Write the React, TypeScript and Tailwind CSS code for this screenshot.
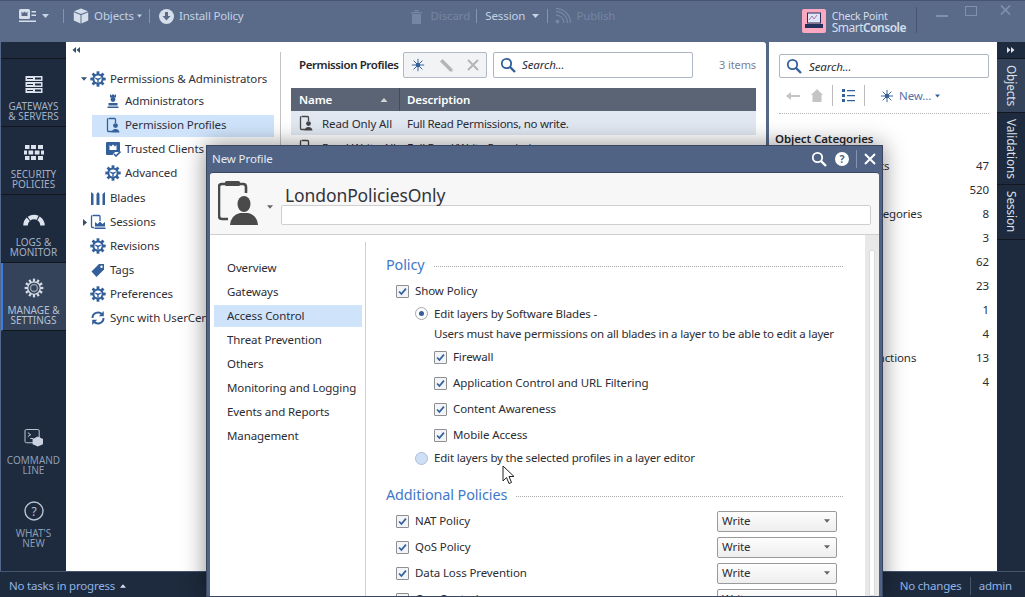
import React from "react";

const B = "#33609a";

function Gear({ c = B, s = 16 }: { c?: string; s?: number }) {
  const teeth = [0, 45, 90, 135, 180, 225, 270, 315];
  return (
    <svg width={s} height={s} viewBox="0 0 16 16" className="shrink-0">
      {teeth.map((a) => (
        <rect key={a} x="6.6" y="0.3" width="2.8" height="3.4" fill={c} transform={`rotate(${a} 8 8)`} />
      ))}
      <circle cx="8" cy="8" r="5.6" fill={c} />
      <circle cx="8" cy="8" r="3.6" fill="#fff" />
      <path d="M5.2 6.4 L8 7.6 L10.8 6.4 L10.8 7.8 L8.7 9 L8.7 11.4 L7.3 11.4 L7.3 9 L5.2 7.8Z" fill={c} />
    </svg>
  );
}

function ProfileIcon({ c = B, s = 16 }: { c?: string; s?: number }) {
  return (
    <svg width={s} height={s} viewBox="0 0 16 16" className="shrink-0">
      <path d="M4 1.5H9.5Q10.5 1.5 10.5 2.5V6M7 14.5H3.5Q2.5 14.5 2.5 13.5V2.5Q2.5 1.5 3.5 1.5" fill="none" stroke={c} strokeWidth="1.3" />
      <circle cx="10.5" cy="8.6" r="2.4" fill={c} />
      <path d="M6.5 15.5 Q7 12 10.5 12 Q14 12 14.5 15.5Z" fill={c} />
    </svg>
  );
}

function Crown({ c = B }: { c?: string }) {
  return (
    <svg width="16" height="16" viewBox="0 0 16 16" className="shrink-0">
      <path d="M5 1 L6.5 2.5 L8 1 L9.5 2.5 L11 1 V4.5 H5Z" fill={c} />
      <circle cx="8" cy="6.5" r="2.4" fill={c} />
      <path d="M3.5 10 H12.5 V12.5 H3.5Z M2.5 13.5 H13.5 V15 H2.5Z" fill={c} />
    </svg>
  );
}

function Shield() {
  return (
    <svg width="16" height="16" viewBox="0 0 16 16" className="shrink-0">
      <path d="M1 2 Q1 1 2 1 H14 Q15 1 15 2 V10 Q15 11 14 11 H10 L7.5 14 H2 Q1 14 1 13Z" fill={B} />
      <path d="M4.5 4 L6.2 5.6 L8 3.6 L9.8 5.6 L11.5 4 V9 H4.5Z" fill="#fff" />
      <path d="M9 13 L11 15 L15.5 10.5" fill="none" stroke={B} strokeWidth="1.6" />
    </svg>
  );
}

function Blades() {
  return (
    <svg width="16" height="16" viewBox="0 0 16 16" className="shrink-0">
      <path d="M1 2 L3.5 4 V15 H1Z M6.5 4 L8 2 L9.5 4 V15 H6.5Z M15 2 L12.5 4 V15 H15Z" fill={B} />
    </svg>
  );
}

function Session() {
  return (
    <svg width="16" height="16" viewBox="0 0 16 16" className="shrink-0">
      <path d="M3 1.5H9Q10 1.5 10 2.5V7M4 13.5H2.5Q1.5 13.5 1.5 12.5V2.5Q1.5 1.5 2.5 1.5" fill="none" stroke={B} strokeWidth="1.3" />
      <path d="M5 8 L7.5 10 L10 7.5 L12.5 10 L15 8 V12.5 H5Z M4.5 13.5 H15.5 V15 H4.5Z" fill={B} />
    </svg>
  );
}

function Tag() {
  return (
    <svg width="16" height="16" viewBox="0 0 16 16" className="shrink-0">
      <path d="M1.5 9.5 L9 2 H14 V7.5 L6.5 15Z" fill={B} />
      <circle cx="11.5" cy="4.8" r="1.2" fill="#fff" />
    </svg>
  );
}

function Sync() {
  return (
    <svg width="16" height="16" viewBox="0 0 16 16" className="shrink-0">
      <path d="M2.5 8 A5.5 5.5 0 0 1 12 4.2" fill="none" stroke={B} strokeWidth="2" />
      <path d="M13.5 8 A5.5 5.5 0 0 1 4 11.8" fill="none" stroke={B} strokeWidth="2" />
      <path d="M13.8 1 V6.2 H8.8Z M2.2 15 V9.8 H7.2Z" fill={B} />
    </svg>
  );
}

function Spark({ c = B, s = 16 }: { c?: string; s?: number }) {
  return (
    <svg width={s} height={s} viewBox="0 0 16 16" className="shrink-0">
      <g stroke={c} strokeWidth="1.1">
        <path d="M8 1V15M1 8H15M3 3L13 13M13 3L3 13" />
      </g>
      <circle cx="8" cy="8" r="2.6" fill={c} />
    </svg>
  );
}

function Magnifier({ c = B, s = 16 }: { c?: string; s?: number }) {
  return (
    <svg width={s} height={s} viewBox="0 0 16 16" className="shrink-0">
      <circle cx="6.5" cy="6.5" r="4.7" fill="none" stroke={c} strokeWidth="1.8" />
      <path d="M10 10 L15 15" stroke={c} strokeWidth="2.4" />
    </svg>
  );
}

function Caret({ c = "#c5d3e6", w = 7 }: { c?: string; w?: number }) {
  return (
    <svg width={w} height={4} viewBox="0 0 7 4" className="shrink-0">
      <path d="M0 0H7L3.5 4Z" fill={c} />
    </svg>
  );
}

function CaretUp({ c = "#c5d3e6", w = 7 }: { c?: string; w?: number }) {
  return (
    <svg width={w} height={4} viewBox="0 0 7 4" className="shrink-0">
      <path d="M0 4H7L3.5 0Z" fill={c} />
    </svg>
  );
}

function DoubleArrow({ left }: { left?: boolean }) {
  return (
    <svg width="8" height="6" viewBox="0 0 8 6">
      <path d={left ? "M4 0V6L0.5 3Z M8 0V6L4.5 3Z" : "M0 0V6L3.5 3Z M4 0V6L7.5 3Z"} fill="currentColor" />
    </svg>
  );
}

function TreeRow({
  icon,
  label,
  sub,
  first,
  selected,
  caret,
}: {
  icon: React.ReactNode;
  label: string;
  sub?: boolean;
  first?: boolean;
  selected?: boolean;
  caret?: "down" | "right";
}) {
  return (
    <div className={`relative flex h-6 items-center whitespace-nowrap ${sub ? "pl-[39px]" : "pl-[24px]"}`}>
      {selected && <div className="absolute left-[26px] top-[1px] h-[22px] w-[182px] bg-[#cfe4fb]" />}
      {caret === "down" && (
        <span className="absolute left-[15px] top-[11px]">
          <Caret c="#33506f" w={6} />
        </span>
      )}
      {caret === "right" && (
        <svg className="absolute left-[17px] top-[9px]" width="4" height="7" viewBox="0 0 4 7">
          <path d="M0 0V7L4 3.5Z" fill="#33506f" />
        </svg>
      )}
      <span className={`relative flex items-center gap-[4px] ${sub ? "-top-[1px]" : first ? "top-[1px]" : ""}`}>
        {icon}
        <span>{label}</span>
      </span>
    </div>
  );
}

function NavItem({
  icon,
  a,
  b,
  active,
}: {
  icon: React.ReactNode;
  a: string;
  b: string;
  active?: boolean;
}) {
  return (
    <div
      className={`flex h-[68px] flex-col items-center border-b border-[#11161f] pt-[15px] text-[10px] leading-[10px] tracking-normal ${
        active ? "bg-[#34425a] border-l-2 border-l-[#3b7de0] pr-[2px] text-[#b6c2d3]" : "text-[#a3b1c6]"
      }`}
    >
      <div className="flex h-[20px] items-center">{icon}</div>
      <div className="mt-[7px] whitespace-nowrap">{a}</div>
      <div className="whitespace-nowrap">{b}</div>
    </div>
  );
}

function Check({ label }: { label: string }) {
  return (
    <div className="flex items-center gap-[6px] whitespace-nowrap">
      <span className="flex h-[13px] w-[13px] items-center justify-center rounded-[1px] border border-[#8f8f8f] bg-[#f1f4f8]">
        <svg width="9" height="9" viewBox="0 0 10 10">
          <path d="M1.2 5 L3.8 7.8 L8.8 1.8" fill="none" stroke="#33609a" strokeWidth="1.9" />
        </svg>
      </span>
      <span>{label}</span>
    </div>
  );
}

function Section({ title }: { title: string }) {
  return (
    <div className="flex items-center gap-[9px] text-[14.4px] leading-5 text-[#3f78c9]">
      <span className="whitespace-nowrap">{title}</span>
      <span className="mt-[3px] h-0 flex-1 border-t border-dotted border-[#a9a9a9]" />
    </div>
  );
}

function PolicyRow({ label }: { label: string }) {
  return (
    <div className="flex h-[26px] items-center justify-between">
      <div className="pl-[10px]">
        <Check label={label} />
      </div>
      <div className="mr-[6px] flex h-[21px] w-[120px] items-center justify-between rounded-[2px] border border-[#9a9a9a] bg-gradient-to-b from-[#fdfdfd] to-[#eeeeee] pl-[4px] pr-[6px]">
        <span>Write</span>
        <Caret c="#666" w={6} />
      </div>
    </div>
  );
}

const counts: [string, string, string][] = [
  ["Network Objects", "47", "pl-[22px]"],
  ["Services", "520", "pl-[22px]"],
  ["Applications/Categories", "8", "pl-[17px]"],
  ["VPN Communities", "3", "pl-[8px]"],
  ["Data Types", "62", "pl-[22px]"],
  ["Users", "23", "pl-[22px]"],
  ["Servers", "1", "pl-[22px]"],
  ["Time Objects", "4", "pl-[22px]"],
  ["UserCheck Interactions", "13", "pl-[14px]"],
  ["Limit", "4", "pl-[22px]"],
];

function TopText({ children, dim }: { children: React.ReactNode; dim?: boolean }) {
  return <span className={dim ? "text-[#7486a3]" : "text-[#c3d1e4]"}>{children}</span>;
}

const Sep = ({ cls }: { cls: string }) => <span className={`h-[14px] w-px bg-[#8294b0] ${cls}`} />;

export default function App() {
  return (
    <div
      className="relative flex h-[597px] w-[1025px] flex-col overflow-hidden bg-[#56688a] text-[11.5px] tracking-[-0.1px] text-[#2c2c33]"
      style={{ fontFamily: '"Noto Sans", sans-serif' }}
    >
      {/* Title bar */}
      <div className="flex h-[42px] shrink-0 items-start border-t border-[#46556f] bg-[#5a6b8a] pt-[8px]">
        <div className="flex h-[14px] items-center pl-[19px]">
          <svg width="17" height="14" viewBox="0 0 17 14">
            <rect x="0" y="0" width="11" height="10" rx="1.5" fill="#d5deeb" />
            <path d="M2.5 2.5 L4 4 L5.5 2.5 L7 4 L8.5 2.5 V7 H2.5Z" fill="#5a6b8a" />
            <path d="M12.5 2H17V3.5H12.5Z M12.5 5.5H17V7H12.5Z M0 11.5H17V13H0Z" fill="#d5deeb" />
          </svg>
          <span className="ml-[6px]"><Caret /></span>
          <Sep cls="ml-[14px]" />
          <svg className="ml-[9px]" width="16" height="16" viewBox="0 0 16 16">
            <path d="M8 0.5 L15 3.2 L8 6 L1 3.2Z" fill="#d5deeb" />
            <path d="M0.8 4.2 L7.5 7 V15.5 L0.8 12.6Z M15.2 4.2 L8.5 7 V15.5 L15.2 12.6Z" fill="#d5deeb" />
          </svg>
          <span className="ml-[5px]"><TopText>Objects</TopText></span>
          <span className="ml-[3px]"><Caret w={5} /></span>
          <Sep cls="ml-[7px]" />
          <svg className="ml-[9px]" width="15" height="15" viewBox="0 0 15 15">
            <circle cx="7.5" cy="7.5" r="7.5" fill="#d5deeb" />
            <path d="M6 3H9V7H11.5L7.5 11.5L3.5 7H6Z" fill="#5a6b8a" />
          </svg>
          <span className="ml-[5px] tracking-[-0.2px]"><TopText>Install Policy</TopText></span>
          <svg className="ml-[167px]" width="13" height="15" viewBox="0 0 13 15">
            <path d="M1 3H12V4.2H1Z M4.5 1H8.5V2.5H4.5Z M2 5H11V15H2Z" fill="#7486a3" />
          </svg>
          <span className="ml-[7px]"><TopText dim>Discard</TopText></span>
          <Sep cls="ml-[6px]" />
          <span className="ml-[8px]"><TopText>Session</TopText></span>
          <span className="ml-[7px]"><Caret /></span>
          <Sep cls="ml-[8px]" />
          <svg className="ml-[7px]" width="17" height="16" viewBox="0 0 17 16">
            <path d="M1 7 A8 8 0 0 1 9 15 M1 3.5 A11.5 11.5 0 0 1 12.5 15 M1 0.5 A14.5 14.5 0 0 1 15.5 15" fill="none" stroke="#7486a3" strokeWidth="1.3" />
            <circle cx="2.5" cy="13.5" r="2" fill="#7486a3" />
          </svg>
          <span className="ml-[4px]"><TopText dim>Publish</TopText></span>
        </div>
        <div className="ml-auto flex items-start">
          <div className="flex h-[24px] w-[24px] items-center justify-center rounded-[2px] bg-[#fba8c0]">
            <svg width="20" height="18" viewBox="0 0 20 18">
              <rect x="3.5" y="1" width="13" height="10" fill="#dfe6f5" stroke="#23305c" />
              <path d="M5 8 L8 4 L10 7 L13 3" fill="none" stroke="#a06090" strokeWidth="0.8" />
              <path d="M1 12 H19 V16 H1Z" fill="#23305c" />
            </svg>
          </div>
          <div className="ml-[6px] flex h-[26px] flex-col justify-center whitespace-nowrap leading-[12px] text-[#d5deeb]">
            <span className="text-[10.5px] tracking-[-0.2px]">Check Point</span>
            <span className="text-[12px] tracking-[-0.5px]">
              Smart<b className="font-semibold">Console</b>
            </span>
          </div>
          <span className="ml-[10px] mt-[-2px] h-[26px] w-px bg-[#46556f]" />
          <span className="ml-[19px] mt-[6px] h-[2px] w-[12px] bg-[#7f91ae]" />
          <span className="ml-[17px] mt-[-3px] h-[10px] w-[12px] border border-[#7f91ae]" />
          <svg className="ml-[23px] mr-[14px] mt-[-4px]" width="11" height="10" viewBox="0 0 12 11">
            <path d="M1 0.5 L11 10.5 M11 0.5 L1 10.5" stroke="#7f91ae" strokeWidth="1.8" />
          </svg>
        </div>
      </div>

      {/* Body */}
      <div className="flex min-h-0 flex-1">
        {/* Left nav */}
        <div className="flex w-[66px] shrink-0 flex-col border-l border-[#56688a] bg-[#1e2a3d]">
          <div className="h-[17px] border-b border-[#11161f]" />
          <NavItem
            a="GATEWAYS"
            b="& SERVERS"
            icon={
              <svg width="18" height="17" viewBox="0 0 18 17">
                {[0, 6, 12].map((y) => (
                  <g key={y}>
                    <rect x="0.5" y={y} width="17" height="5" fill="#dde4ee" />
                    <rect x="10" y={y + 1.5} width="6" height="2" fill="#1e2a3d" />
                    <rect x="2" y={y + 2} width="6" height="1" fill="#1e2a3d" />
                  </g>
                ))}
              </svg>
            }
          />
          <NavItem
            a="SECURITY"
            b="POLICIES"
            icon={
              <svg width="20" height="15" viewBox="0 0 20 15">
                <path d="M1 0H5.5V4H1Z M7 0H12V4H7Z M14 0H19V4H14Z M0 5.5H3V9.5H0Z M4.5 5.5H9.2V9.5H4.5Z M10.8 5.5H15.5V9.5H10.8Z M17 5.5H20V9.5H17Z M1 11H5.5V15H1Z M7 11H12V15H7Z M14 11H19V15H14Z" fill="#dde4ee" />
              </svg>
            }
          />
          <NavItem
            a="LOGS &"
            b="MONITOR"
            icon={
              <svg width="22" height="12" viewBox="0 0 22 12">
                <path d="M2.5 11.5 A8.5 8.5 0 0 1 19.5 11.5" fill="none" stroke="#dde4ee" strokeWidth="4.5" strokeDasharray="7 1 9 1 9" />
              </svg>
            }
          />
          <NavItem
            active
            a="MANAGE &"
            b="SETTINGS"
            icon={
              <svg width="20" height="20" viewBox="0 0 16 16">
                {[0, 30, 60, 90, 120, 150, 180, 210, 240, 270, 300, 330].map((a) => (
                  <rect key={a} x="7.1" y="0.5" width="1.8" height="2.6" fill="#d5dbe4" transform={`rotate(${a} 8 8)`} />
                ))}
                <circle cx="8" cy="8" r="5" fill="none" stroke="#d5dbe4" strokeWidth="1" />
                <circle cx="8" cy="8" r="2.8" fill="none" stroke="#8f9aab" strokeWidth="1.2" />
              </svg>
            }
          />
          <div className="mt-auto flex flex-col items-center text-[10px] leading-[10px] tracking-normal text-[#8d9db4]">
            <svg width="20" height="18" viewBox="0 0 20 19">
              <rect x="0.5" y="0.5" width="15" height="14" rx="1.5" fill="none" stroke="#c9d2de" />
              <path d="M3.5 4 L6.5 6 L3.5 8 M6 10 H9" fill="none" stroke="#c9d2de" />
              <path d="M14 8 L19.5 10.5 V16 L14 18.5 L8.5 16 V10.5Z" fill="#c9d2de" />
            </svg>
            <div className="mt-[8px]">COMMAND</div>
            <div>LINE</div>
            <svg className="mt-[26px]" width="20" height="20" viewBox="0 0 20 20">
              <circle cx="10" cy="10" r="9" fill="none" stroke="#b9c3d0" strokeWidth="1.4" />
              <text x="10" y="14.5" textAnchor="middle" fontSize="12" fill="#b9c3d0">?</text>
            </svg>
            <div className="mt-[7px]">WHAT'S</div>
            <div className="mb-[23px]">NEW</div>
          </div>
        </div>

        {/* Centre panel */}
        <div className="flex w-[700px] shrink-0 rounded-tr-[3px] bg-white">
          <div className="relative w-[214px] shrink-0 pt-[24px] text-[#30303a]">
            <span className="absolute left-[6px] top-[5px] text-[#33506f]"><DoubleArrow left /></span>
            <TreeRow first caret="down" icon={<Gear />} label="Permissions & Administrators" />
            <TreeRow sub icon={<Crown />} label="Administrators" />
            <TreeRow sub selected icon={<ProfileIcon />} label="Permission Profiles" />
            <TreeRow sub icon={<Shield />} label="Trusted Clients" />
            <TreeRow sub icon={<Gear />} label="Advanced" />
            <TreeRow icon={<Blades />} label="Blades" />
            <TreeRow caret="right" icon={<Session />} label="Sessions" />
            <TreeRow icon={<Gear />} label="Revisions" />
            <TreeRow icon={<Tag />} label="Tags" />
            <TreeRow icon={<Gear />} label="Preferences" />
            <TreeRow icon={<Sync />} label="Sync with UserCenter" />
          </div>
          <div className="mt-[10px] min-w-0 flex-1 border-l border-[#c4c4c4] pl-[10px] pr-[10px]">
            <div className="flex h-[26px] items-center">
              <span className="ml-[8px] w-[104px] whitespace-nowrap font-semibold tracking-[-0.4px] text-[#26262c]">Permission Profiles</span>
              <div className="flex h-[26px] w-[84px] items-center gap-[14px] rounded-[2px] border border-[#b1b9c6] bg-[#f2f3f5] px-[7px]">
                <Spark s={14} />
                <svg width="14" height="14" viewBox="0 0 14 14"><path d="M1 3.5 L3.5 1 L13.5 11 L13.5 13.5 L11 13.5 Z" fill="#b5b5b5" /></svg>
                <svg width="12" height="12" viewBox="0 0 12 12"><path d="M1 1 L11 11 M11 1 L1 11" stroke="#b5b5b5" strokeWidth="2" /></svg>
              </div>
              <div className="ml-[6px] flex h-[26px] w-[200px] items-center gap-[6px] rounded-[2px] border border-[#aeb6c3] bg-white px-[6px] italic">
                <Magnifier s={16} />
                <span>Search...</span>
              </div>
              <span className="ml-auto whitespace-nowrap text-[11px] tracking-[-0.1px] text-[#7a7f9a]">3 items</span>
            </div>
            <div className="mt-[10px] flex h-[23px] items-center bg-[#5a6475] font-semibold text-white">
              <div className="flex h-full w-[109px] items-center justify-between border-r border-[#444d5c] pl-[8px] pr-[11px]">
                <span>Name</span>
                <CaretUp c="#d5d5d5" w={8} />
              </div>
              <div className="pl-[7px]">Description</div>
            </div>
            <div className="flex h-[24px] items-center bg-[#e1e8f2]">
              <div className="flex w-[109px] items-center gap-[8px] pl-[7px]">
                <ProfileIcon c="#444" />
                <span className="mt-[2px] whitespace-nowrap">Read Only All</span>
              </div>
              <div className="mt-[2px] pl-[7px] tracking-[-0.3px]">Full Read Permissions, no write.</div>
            </div>
            <div className="flex h-[24px] items-center">
              <div className="flex w-[109px] items-center gap-[8px] pl-[7px]">
                <ProfileIcon c="#444" />
                <span className="mt-[2px] whitespace-nowrap">Read Write All</span>
              </div>
              <div className="mt-[2px] pl-[7px] tracking-[-0.3px]">Full Read/Write Permissions.</div>
            </div>
          </div>
        </div>

        {/* Right panel */}
        <div className="ml-[3px] flex w-[228px] shrink-0 flex-col bg-white pl-[10px] pr-[8px] pt-[12px]">
          <div className="flex h-[24px] items-center gap-[7px] rounded-[2px] border border-[#aeb6c3] px-[6px] italic">
            <Magnifier s={16} />
            <span className="mt-[1px]">Search...</span>
          </div>
          <div className="flex h-[36px] items-center border-b border-dotted border-[#b5b5b5] text-[#5573a6]">
            <svg className="ml-[7px]" width="14" height="8" viewBox="0 0 14 8"><path d="M0 4 L5 0 V3 H14 V5 H5 V8Z" fill="#c4c4c4" /></svg>
            <svg className="ml-[11px]" width="12" height="13" viewBox="0 0 12 13"><path d="M6 0 L12 6 H10.5 V13 H1.5 V6 H0Z" fill="#c4c4c4" /></svg>
            <span className="ml-[9px] h-[21px] w-px bg-[#bbb]" />
            <svg className="ml-[9px]" width="13" height="13" viewBox="0 0 13 13">
              <path d="M0 0H3V3H0Z M0 5H3V8H0Z M0 10H3V13H0Z" fill="#33609a" />
              <path d="M5 1H13V2.2H5Z M5 6H13V7.2H5Z M5 11H13V12.2H5Z" fill="#33609a" />
            </svg>
            <span className="ml-[9px] h-[21px] w-px bg-[#bbb]" />
            <span className="ml-[15px]"><Spark s={14} /></span>
            <span className="ml-[5px]">New...</span>
            <span className="ml-[4px]"><Caret c="#33609a" w={5} /></span>
          </div>
          <div className="-ml-[4px] mt-[16px] font-semibold text-[#26262c]">Object Categories</div>
          <div className="mt-[6px]">
            {counts.map(([l, n, p]) => (
              <div key={l} className="flex h-[24px] items-center justify-between whitespace-nowrap">
                <span className={p}>{l}</span>
                <span>{n}</span>
              </div>
            ))}
          </div>
        </div>

        {/* Right tabs */}
        <div className="ml-auto flex w-[28px] shrink-0 flex-col bg-[#1e2a3d] text-[11.8px] text-[#d9e0ea]">
          <div className="flex h-[17px] items-center justify-center border-b border-[#11161f] text-[#dfe5ee]">
            <DoubleArrow />
          </div>
          <div className="flex h-[54px] items-center justify-center border-b border-[#11161f] bg-[#34425a] [writing-mode:vertical-rl]">Objects</div>
          <div className="flex h-[72px] items-center justify-center border-b border-[#11161f] [writing-mode:vertical-rl]">Validations</div>
          <div className="flex h-[55px] items-center justify-center border-b border-[#11161f] [writing-mode:vertical-rl]">Session</div>
        </div>
      </div>

      {/* Status bar */}
      <div className="flex h-[26px] shrink-0 items-center border-t border-[#46566f] bg-[#1e2a3d] pt-[2px] tracking-[-0.2px] text-[#8fb5e6]">
        <span className="ml-[9px]">No tasks in progress</span>
        <span className="ml-[5px]"><CaretUp c="#d5deeb" w={6} /></span>
        <span className="ml-auto">No changes</span>
        <span className="ml-[8px] h-[18px] w-px bg-[#46566f]" />
        <span className="ml-[8px] mr-[13px]">admin</span>
      </div>

      {/* Modal */}
      <div className="absolute left-[206px] top-[145px] flex h-[452px] w-[677px] flex-col border border-[#3a4660] bg-[#506385] px-[3px] shadow-[0_0_22px_rgba(0,0,0,0.45)]">
        <div className="flex h-[26px] shrink-0 items-center justify-between text-[#e6ebf3]">
          <span className="ml-[2px]">New Profile</span>
          <div className="flex items-center">
            <Magnifier c="#fff" s={16} />
            <svg className="ml-[8px]" width="14" height="14" viewBox="0 0 14 14">
              <circle cx="7" cy="7" r="7" fill="#fff" />
              <text x="7" y="11" textAnchor="middle" fontSize="10.5" fontWeight="700" fill="#506385">?</text>
            </svg>
            <span className="ml-[7px] h-[18px] w-px bg-[#8294b0]" />
            <svg className="ml-[7px] mr-[3px]" width="12" height="12" viewBox="0 0 12 12">
              <path d="M1 1 L11 11 M11 1 L1 11" stroke="#fff" strokeWidth="2" />
            </svg>
          </div>
        </div>
        <div className="flex min-h-0 flex-1 flex-col overflow-hidden rounded-t-[3px] border-t border-[#3a4660] bg-[#f7f7f7]">
          <div className="flex h-[62px] shrink-0 border-b border-[#cfcfcf] pl-[8px] pr-[8px] pt-[7px]">
            <svg width="41" height="47" viewBox="0 0 41 47" className="shrink-0">
              <path d="M8 4 H4 Q1 4 1 7 V36 Q1 39 4 39 H10 M21 4 H25 Q28 4 28 7 V13" fill="none" stroke="#4a4a4a" strokeWidth="2.6" />
              <rect x="7" y="1" width="15" height="5" rx="1.5" fill="#4a4a4a" />
              <ellipse cx="26" cy="24" rx="6.5" ry="8" fill="#4a4a4a" />
              <path d="M12 45 Q13 35 22 33 H30 Q39 35 40 45Z" fill="#4a4a4a" />
            </svg>
            <span className="ml-[8px] mt-[25px]"><Caret c="#666" w={6} /></span>
            <div className="ml-[8px] min-w-0 flex-1">
              <div className="ml-[4px] h-[25px] text-[17.5px] leading-[31px] text-[#33333a]">LondonPoliciesOnly</div>
              <div className="h-[20px] rounded-[2px] border border-[#cfcfcf] bg-white" />
            </div>
          </div>
          <div className="flex min-h-0 flex-1 bg-white">
            <div className="mt-[7px] w-[155px] shrink-0 pl-[4px] pt-[14px]">
              <div className="mr-[3px] flex h-[24px] items-center pl-[13px]">Overview</div>
              <div className="mr-[3px] flex h-[24px] items-center pl-[13px]">Gateways</div>
              <div className="mr-[3px] my-[1px] flex h-[22px] items-center bg-[#cfe4fb] pl-[13px]">Access Control</div>
              <div className="mr-[3px] flex h-[24px] items-center pl-[13px]">Threat Prevention</div>
              <div className="mr-[3px] flex h-[24px] items-center pl-[13px]">Others</div>
              <div className="flex h-[24px] items-center whitespace-nowrap pl-[13px]">Monitoring and Logging</div>
              <div className="mr-[3px] flex h-[24px] items-center pl-[13px]">Events and Reports</div>
              <div className="mr-[3px] flex h-[24px] items-center pl-[13px]">Management</div>
            </div>
            <div className="mt-[7px] min-w-0 flex-1 border-l border-[#d0d0d0] pl-[20px] pr-[22px] pt-[13px]">
              <Section title="Policy" />
              <div className="mt-[6px] pl-[10px]">
                <div className="flex h-[20px] items-center"><Check label="Show Policy" /></div>
                <div className="mt-[2px] flex h-[21px] items-center gap-[6px] whitespace-nowrap pl-[19px]">
                  <span className="flex h-[13px] w-[13px] items-center justify-center rounded-full border border-[#a6a6a6] bg-white">
                    <span className="h-[5px] w-[5px] rounded-full bg-[#33609a]" />
                  </span>
                  <span className="tracking-[-0.15px]">Edit layers by Software Blades -</span>
                </div>
                <div className="flex h-[20px] items-center whitespace-nowrap pl-[38px] tracking-[-0.19px]">Users must have permissions on all blades in a layer to be able to edit a layer</div>
                <div className="pl-[38px]">
                  <div className="flex h-[26px] items-center"><Check label="Firewall" /></div>
                  <div className="flex h-[26px] items-center"><Check label="Application Control and URL Filtering" /></div>
                  <div className="flex h-[26px] items-center"><Check label="Content Awareness" /></div>
                  <div className="flex h-[26px] items-center"><Check label="Mobile Access" /></div>
                </div>
                <div className="flex h-[20px] items-center gap-[6px] whitespace-nowrap pl-[19px]">
                  <span className="h-[13px] w-[13px] rounded-full border border-[#a9bedb] bg-[#cfe0f5]" />
                  <span className="tracking-[-0.18px]">Edit layers by the selected profiles in a layer editor</span>
                </div>
              </div>
              <div className="mt-[17px]">
                <Section title="Additional Policies" />
              </div>
              <div className="mt-[3px]">
                <PolicyRow label="NAT Policy" />
                <PolicyRow label="QoS Policy" />
                <PolicyRow label="Data Loss Prevention" />
                <PolicyRow label="Geo Control" />
              </div>
            </div>
            <div className="w-[14px] shrink-0 self-stretch bg-[#e8e8e8] pl-[4px] pt-[15px]">
              <div className="h-full w-[6px] rounded-t-[2px] border border-[#dcdcdc] bg-white" />
            </div>
          </div>
        </div>
      </div>

      {/* Mouse pointer */}
      <svg className="absolute left-[502px] top-[465px]" width="13" height="20" viewBox="0 0 13 20">
        <path d="M1 1 V16 L4.5 12.5 L7 18.5 L9.5 17.5 L7 11.5 H12Z" fill="#fff" stroke="#222" strokeWidth="1" />
      </svg>
    </div>
  );
}
